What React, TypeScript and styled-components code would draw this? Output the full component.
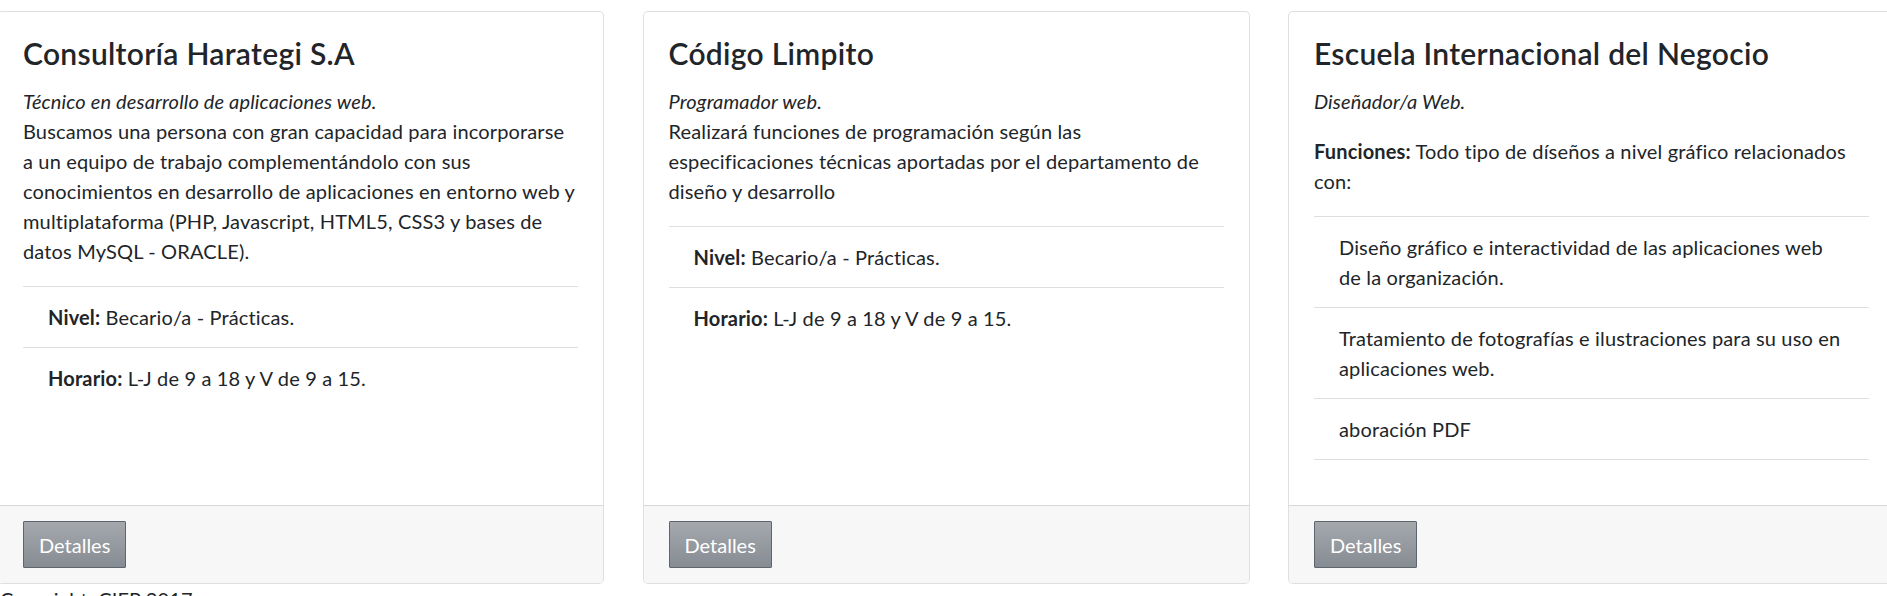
import styled, { createGlobalStyle } from "styled-components";

const GlobalStyle = createGlobalStyle`
  *, *::before, *::after {
    box-sizing: border-box;
  }
  html, body {
    margin: 0;
    overflow: hidden;
    background: #fff;
  }
  body {
    font-family: "Lato", "Open Sans", sans-serif;
    font-size: 20px;
    line-height: 1.5;
    letter-spacing: 0.15px;
    color: #212529;
  }
`;

const Deck = styled.div`
  display: flex;
  align-items: stretch;
  gap: 38.5px;
  width: max-content;
  margin-left: -3px;
  padding-top: 11px;
`;

const Card = styled.div`
  flex: 0 0 607px;
  display: flex;
  flex-direction: column;
  background: #fff;
  border: 1px solid rgba(0, 0, 0, 0.125);
  border-radius: 5px;
`;

const CardBody = styled.div`
  flex: 1;
  padding: 23px 25px 25px;
`;

const Title = styled.h4`
  margin: 0 0 15px;
  font-size: 30px;
  font-weight: 600;
  line-height: 1.2;
  letter-spacing: 0.3px;
`;

const Text = styled.p`
  margin: 0 0 20px;
`;

const List = styled.ul<{ $closed?: boolean }>`
  margin: 0 0 ${(p) => (p.$closed ? "20px" : "0")};
  padding: 0;
  list-style: none;

  li:last-child {
    border-bottom: ${(p) => (p.$closed ? "1px solid rgba(0, 0, 0, 0.125)" : "0")};
  }
`;

const Item = styled.li`
  padding: 15px 25px;
  border-top: 1px solid rgba(0, 0, 0, 0.125);
`;

const CardFooter = styled.div`
  padding: 15px 25px;
  background: #f7f7f7;
  border-top: 1px solid rgba(0, 0, 0, 0.125);
  border-radius: 0 0 4px 4px;
`;

const Button = styled.button`
  display: inline-block;
  padding: 7.5px 15px;
  font-family: inherit;
  font-size: 20px;
  line-height: 1.5;
  letter-spacing: 0;
  color: #fff;
  background: linear-gradient(180deg, #a5a9ae, #868c93);
  border: 1px solid #60666d;
  border-radius: 1px;
  cursor: pointer;
`;

const Copyright = styled.div`
  padding-left: 0;
`;

type Offer = {
  company: string;
  role: string;
  description?: string;
  functions?: string;
  items: { label?: string; text: React.ReactNode }[];
  closed?: boolean;
};

const offers: Offer[] = [
  {
    company: "Consultoría Harategi S.A",
    role: "Técnico en desarrollo de aplicaciones web.",
    description:
      "Buscamos una persona con gran capacidad para incorporarse a un equipo de trabajo complementándolo con sus conocimientos en desarrollo de aplicaciones en entorno web y multiplataforma (PHP, Javascript, HTML5, CSS3 y bases de datos MySQL - ORACLE).",
    items: [
      { label: "Nivel:", text: "Becario/a - Prácticas." },
      { label: "Horario:", text: "L-J de 9 a 18 y V de 9 a 15." },
    ],
  },
  {
    company: "Código Limpito",
    role: "Programador web.",
    description:
      "Realizará funciones de programación según las especificaciones técnicas aportadas por el departamento de diseño y desarrollo",
    items: [
      { label: "Nivel:", text: "Becario/a - Prácticas." },
      { label: "Horario:", text: "L-J de 9 a 18 y V de 9 a 15." },
    ],
  },
  {
    company: "Escuela Internacional del Negocio",
    role: "Diseñador/a Web.",
    functions: "Todo tipo de díseños a nivel gráfico relacionados con:",
    items: [
      {
        text: (
          <>
            Diseño gráfico e interactividad de las aplicaciones web
            <br />
            de la organización.
          </>
        ),
      },
      { text: "Tratamiento de fotografías e ilustraciones para su uso en aplicaciones web." },
      { text: "aboración PDF" },
    ],
    closed: true,
  },
];

export default function App() {
  return (
    <>
      <GlobalStyle />
      <Deck>
        {offers.map((offer) => (
          <Card key={offer.company}>
            <CardBody>
              <Title>{offer.company}</Title>
              {offer.description ? (
                <Text>
                  <em>{offer.role}</em>
                  <br />
                  {offer.description}
                </Text>
              ) : (
                <Text>
                  <em>{offer.role}</em>
                </Text>
              )}
              {offer.functions && (
                <Text>
                  <strong>Funciones:</strong> {offer.functions}
                </Text>
              )}
              <List $closed={offer.closed}>
                {offer.items.map((item, i) => (
                  <Item key={i}>
                    {item.label && <strong>{item.label}</strong>} {item.text}
                  </Item>
                ))}
              </List>
            </CardBody>
            <CardFooter>
              <Button>Detalles</Button>
            </CardFooter>
          </Card>
        ))}
      </Deck>
      <Copyright>Copyright: CIFP 2017</Copyright>
    </>
  );
}
